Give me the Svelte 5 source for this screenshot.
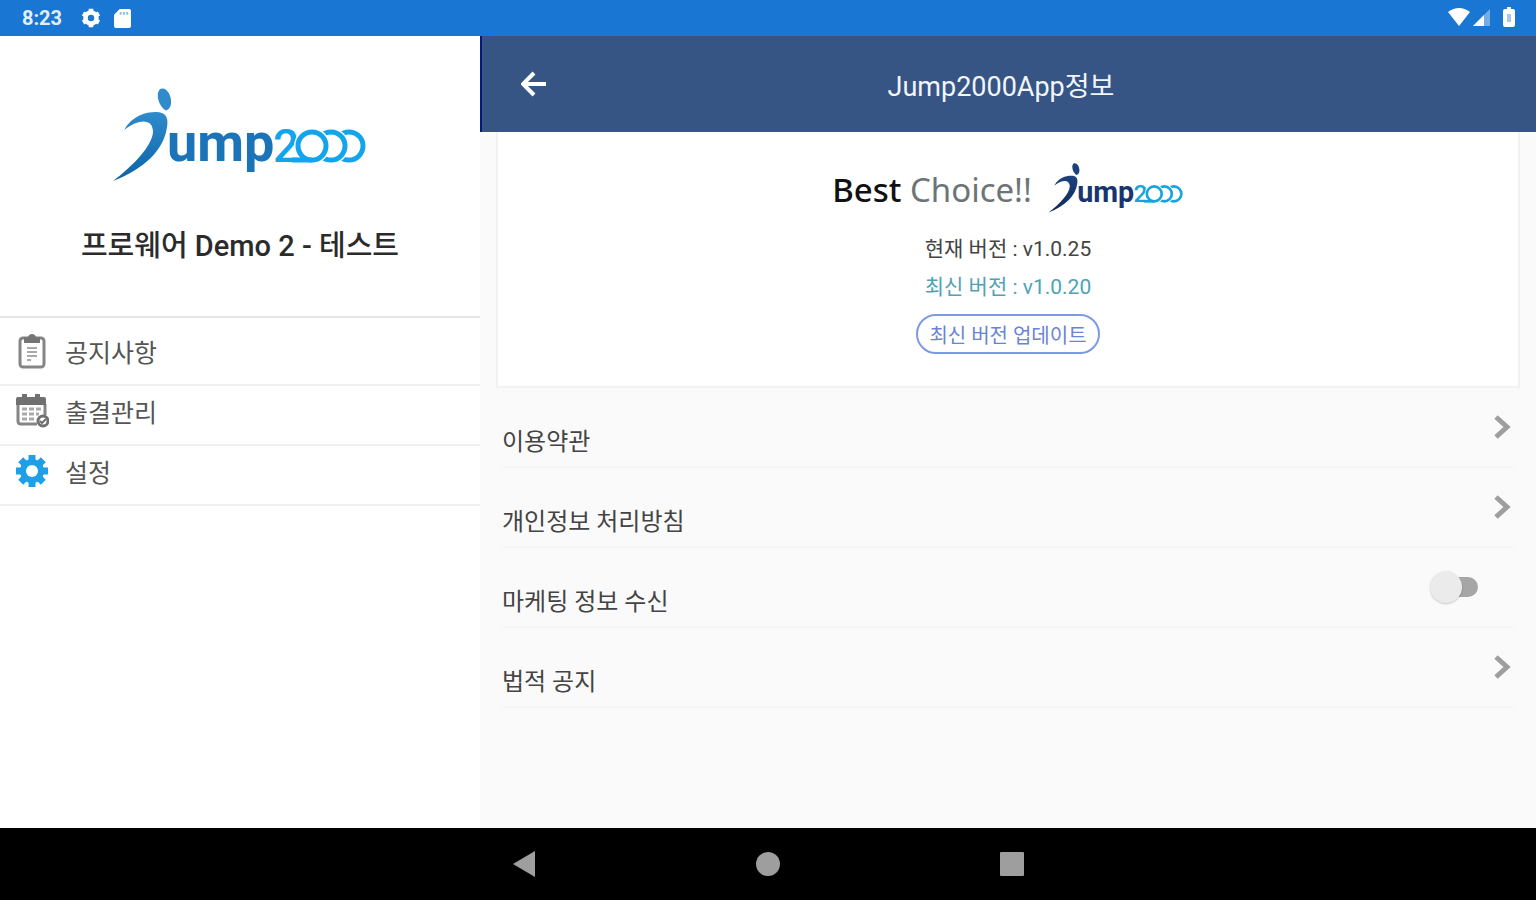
<script lang="ts">
	let marketing = $state(false);

	const menu = [
		{ id: 'notice', label: '공지사항' },
		{ id: 'attendance', label: '출결관리' },
		{ id: 'settings', label: '설정' }
	];
</script>

{#snippet logo(kind: string)}
	<svg class="logo {kind}" viewBox="0 0 256 96" role="img" aria-label="Jump2000">
		<defs>
			<linearGradient id="body-{kind}" x1="0" y1="0" x2="0" y2="1">
				<stop class="stop-top" offset="0" />
				<stop class="stop-bottom" offset="1" />
			</linearGradient>
		</defs>
		<path class="head" d="M48 3C54 0 60 9 59 18C58 23 55 25 53 24C47 20 43 8 48 3Z" />
		<path
			fill="url(#body-{kind})"
			d="M12 44C20 30 33 26 44 26C53 26 57 31 55 41C52 64 32 83 1 95C22 79 40 60 41 46C41 33 28 32 12 44Z"
		/>
		<text class="ump" x="55" y="75">ump</text>
		<text class="two" x="161" y="76">2</text>
		<circle class="ring" cx="237" cy="60" r="14" />
		<circle class="gap" cx="219" cy="60" r="18" />
		<circle class="ring" cx="219" cy="60" r="14" />
		<circle class="gap" cx="200" cy="60" r="18" />
		<path class="ring" d="M180 74H200" />
		<circle class="ring" cx="200" cy="60" r="14" />
	</svg>
{/snippet}

{#snippet chevron()}
	<svg class="chevron" viewBox="0 0 18 26" aria-hidden="true">
		<path d="M2 3L13 13L2 23" />
	</svg>
{/snippet}

<div class="screen">
	<div class="status">
		<span class="time">8:23</span>
		<svg class="cog" viewBox="0 0 24 24" aria-hidden="true">
			<circle cx="12" cy="12" r="6" fill="none" stroke="#fff" stroke-width="5" />
			<path
				d="M12 2V6M12 18V22M3.3 7L6.8 9M17.2 15L20.7 17M3.3 17L6.8 15M17.2 9L20.7 7"
				stroke="#fff"
				stroke-width="5"
			/>
		</svg>
		<svg class="card-icon" viewBox="0 0 18 20" aria-hidden="true">
			<path d="M6 0H16Q18 0 18 2V18Q18 20 16 20H2Q0 20 0 18V6Z" fill="#fff" />
			<path d="M7 3V6M10.5 3V6M14 3V6" stroke="#8dbbea" stroke-width="2" />
		</svg>
		<svg class="signals" viewBox="0 0 68 22" aria-hidden="true">
			<path d="M0 5Q11-3 22 5L11 19Z" fill="#fff" />
			<path d="M42 2V19H25Z" fill="#75ace5" />
			<path d="M36 8V19H25Z" fill="#fff" />
			<path d="M57 2H59V0H63V2H65Q67 2 67 4V18Q67 20 65 20H57Q55 20 55 18V4Q55 2 57 2Z" fill="#fff" />
			<path d="M59 7H63V15H59Z" fill="#a9c8ec" />
		</svg>
	</div>

	<div class="content">
		<aside>
			<div class="brand">
				{@render logo('large')}
				<h2>프로웨어 Demo 2 - 테스트</h2>
			</div>
			<nav class="menu">
				{#each menu as item (item.id)}
					<a href="#{item.id}">
						<svg viewBox="0 0 34 36" aria-hidden="true">
							{#if item.id === 'notice'}
								<rect x="5" y="5" width="24" height="29" rx="3" fill="none" stroke="#858585" stroke-width="3" />
								<path d="M9 4H13Q14 1 17 1Q20 1 21 4H25V10H9Z" fill="#757575" />
								<path d="M12 15H22M12 19H22M12 23H22M12 27H16" stroke="#aaa" stroke-width="2" />
							{:else if item.id === 'attendance'}
								<path d="M3 11V28Q3 31 6 31H22M30 11V22" fill="none" stroke="#858585" stroke-width="3" />
								<path d="M1 12V6Q1 4 3 4H7V1H12V4H20V1H25V4H29Q31 4 31 6V12Z" fill="#707070" />
								<path d="M7 16H26M7 21H24M7 26H19" stroke="#aaa" stroke-width="3" stroke-dasharray="5 2" />
								<circle cx="28" cy="28" r="5" fill="#fff" stroke="#707070" stroke-width="3" />
								<path d="M25 28L27 30L31 26" fill="none" stroke="#707070" stroke-width="2" />
							{:else}
								<path
									d="M17 2V34M1 18H33M5.7 6.7L28.3 29.3M28.3 6.7L5.7 29.3"
									stroke="#1e9fe8"
									stroke-width="7"
								/>
								<circle cx="17" cy="18" r="12" fill="#1e9fe8" />
								<circle cx="17" cy="18" r="6" fill="#fff" />
							{/if}
						</svg>
						{item.label}
					</a>
				{/each}
			</nav>
		</aside>

		<main>
			<header>
				<button class="back" aria-label="뒤로">
					<svg viewBox="0 0 26 26" aria-hidden="true">
						<path d="M25 13H3M13 2L2 13L13 24" />
					</svg>
				</button>
				<h1>Jump2000App정보</h1>
			</header>

			<section class="card">
				<div class="slogan">
					<p>Best <span>Choice!!</span></p>
					{@render logo('small')}
				</div>
				<p class="version">현재 버전 : v1.0.25</p>
				<p class="version latest">최신 버전 : v1.0.20</p>
				<button class="update">최신 버전 업데이트</button>
			</section>

			<div class="rows">
				<a class="row" href="#terms"><span>이용약관</span>{@render chevron()}</a>
				<a class="row" href="#privacy"><span>개인정보 처리방침</span>{@render chevron()}</a>
				<label class="row">
					<span>마케팅 정보 수신</span>
					<input type="checkbox" role="switch" bind:checked={marketing} />
				</label>
				<a class="row" href="#legal"><span>법적 공지</span>{@render chevron()}</a>
			</div>
		</main>
	</div>

	<div class="navbar">
		<button aria-label="뒤로 가기">
			<svg viewBox="0 0 24 28"><path d="M1 14L23 1V27Z" /></svg>
		</button>
		<button aria-label="홈">
			<svg viewBox="0 0 24 28"><circle cx="12" cy="14" r="12" /></svg>
		</button>
		<button aria-label="최근 앱">
			<svg viewBox="0 0 24 28"><rect y="2" width="24" height="24" rx="1" /></svg>
		</button>
	</div>
</div>

<style>
	:global(body) {
		margin: 0;
	}
	.screen {
		display: flex;
		flex-direction: column;
		min-height: 100vh;
		font-family: Roboto, 'Noto Sans CJK KR', sans-serif;
		color: #444;
		background: #fafafa;
	}
	h1,
	h2,
	p {
		margin: 0;
	}
	a {
		color: inherit;
		text-decoration: none;
	}
	button {
		font: inherit;
		border: 0;
		padding: 0;
		background: none;
		cursor: pointer;
	}
	svg {
		display: block;
		flex: none;
	}

	.status {
		display: flex;
		align-items: center;
		height: 36px;
		padding: 0 20px 0 22px;
		background: #1976d2;
		color: #e3eefa;
	}
	.time {
		font-size: 20px;
		font-weight: 700;
		margin-right: 18px;
	}
	.cog {
		width: 22px;
		height: 22px;
		margin-right: 12px;
	}
	.card-icon {
		width: 17px;
		height: 19px;
	}
	.signals {
		width: 68px;
		height: 22px;
		margin-left: auto;
	}

	.content {
		flex: 1;
		display: grid;
		grid-template-columns: 5fr 11fr;
	}
	aside {
		background: #fff;
	}
	.brand {
		display: flex;
		flex-direction: column;
		align-items: center;
		gap: 42px;
		padding: 50px 0 48px;
		border-bottom: 2px solid #e6e6e6;
	}
	h2 {
		font-size: 29px;
		line-height: 44px;
		font-weight: 500;
		color: #2b2b2b;
	}
	.logo {
		overflow: visible;
	}
	.large {
		--main: #1b74b8;
		--top: #2f8bcb;
		--bottom: #0d63a8;
		--accent: #12a5ee;
		width: 256px;
		height: 96px;
	}
	.small {
		--main: #17366f;
		--top: #1b427e;
		--bottom: #0e2a5c;
		--accent: #16a4de;
		width: 136px;
		height: 51px;
	}
	.stop-top {
		stop-color: var(--top);
	}
	.stop-bottom {
		stop-color: var(--bottom);
	}
	.head {
		fill: var(--top);
	}
	.ump,
	.two {
		font-family: Roboto, sans-serif;
		font-weight: 700;
		font-size: 54px;
		fill: var(--main);
	}
	.two {
		font-weight: 500;
		font-size: 46px;
		fill: var(--accent);
	}
	.ring {
		fill: none;
		stroke: var(--accent);
		stroke-width: 5;
	}
	.gap {
		fill: #fff;
	}

	.menu {
		padding-top: 8px;
	}
	.menu a {
		box-sizing: border-box;
		display: flex;
		align-items: center;
		gap: 16px;
		height: 60px;
		padding: 0 15px 8px;
		border-bottom: 2px solid #f0f0f0;
		font-size: 25px;
		color: #555;
	}
	.menu svg {
		width: 34px;
		height: 36px;
	}

	header {
		display: grid;
		grid-template-columns: 64px 1fr 80px;
		align-items: center;
		height: 96px;
		padding: 0 20px;
		background: #365585;
		border-left: 2px solid #001c78;
		box-sizing: border-box;
		color: #f2f5fa;
	}
	.back {
		justify-self: center;
	}
	.back svg {
		width: 26px;
		height: 26px;
		fill: none;
		stroke: #fff;
		stroke-width: 4;
	}
	h1 {
		font-size: 27px;
		font-weight: 400;
		text-align: center;
	}
	.card {
		display: flex;
		flex-direction: column;
		align-items: center;
		margin: 0 16px;
		padding: 24px 0 32px;
		background: #fff;
		border: 2px solid #f1f1f1;
		border-top: 0;
	}
	.slogan {
		display: flex;
		align-items: flex-start;
		gap: 16px;
		height: 60px;
		margin-bottom: 14px;
		padding-top: 0;
	}
	.slogan p {
		font-family: 'Noto Sans', sans-serif;
		font-size: 33px;
		line-height: 68px;
		font-weight: 500;
		color: #111;
	}
	.slogan svg {
		margin-top: 6px;
	}
	.slogan span {
		font-weight: 400;
		color: #6d7478;
	}
	.version {
		font-size: 21px;
		line-height: 38px;
	}
	.latest {
		color: #4fa3b4;
	}
	.update {
		height: 40px;
		margin-top: 8px;
		padding: 0 11px;
		border: 2px solid #7b9be6;
		border-radius: 20px;
		font-size: 20px;
		color: #6a83d6;
	}

	.rows {
		margin: 0 22px;
	}
	.row {
		box-sizing: border-box;
		display: flex;
		align-items: center;
		justify-content: space-between;
		height: 80px;
		padding-right: 2px;
		border-bottom: 2px solid #f6f6f6;
		font-size: 24px;
	}
	.row span {
		padding-top: 24px;
	}
	.chevron {
		width: 18px;
		height: 26px;
		fill: none;
		stroke: #9e9e9e;
		stroke-width: 5;
	}
	input {
		appearance: none;
		display: grid;
		align-items: center;
		width: 48px;
		height: 32px;
		margin: 0 34px 0 0;
		cursor: pointer;
	}
	input::before,
	input::after {
		content: '';
		grid-area: 1 / 1;
	}
	input::before {
		height: 20px;
		margin-left: 6px;
		border-radius: 10px;
		background: #a6a6a6;
	}
	input::after {
		width: 32px;
		height: 32px;
		border-radius: 50%;
		background: #ebebeb;
		box-shadow: 0 1px 2px #0003;
	}
	input:checked::after {
		justify-self: end;
	}

	.navbar {
		display: flex;
		align-items: center;
		justify-content: center;
		gap: 220px;
		height: 72px;
		background: #000;
	}
	.navbar svg {
		width: 24px;
		height: 28px;
		fill: #9e9e9e;
	}
</style>
